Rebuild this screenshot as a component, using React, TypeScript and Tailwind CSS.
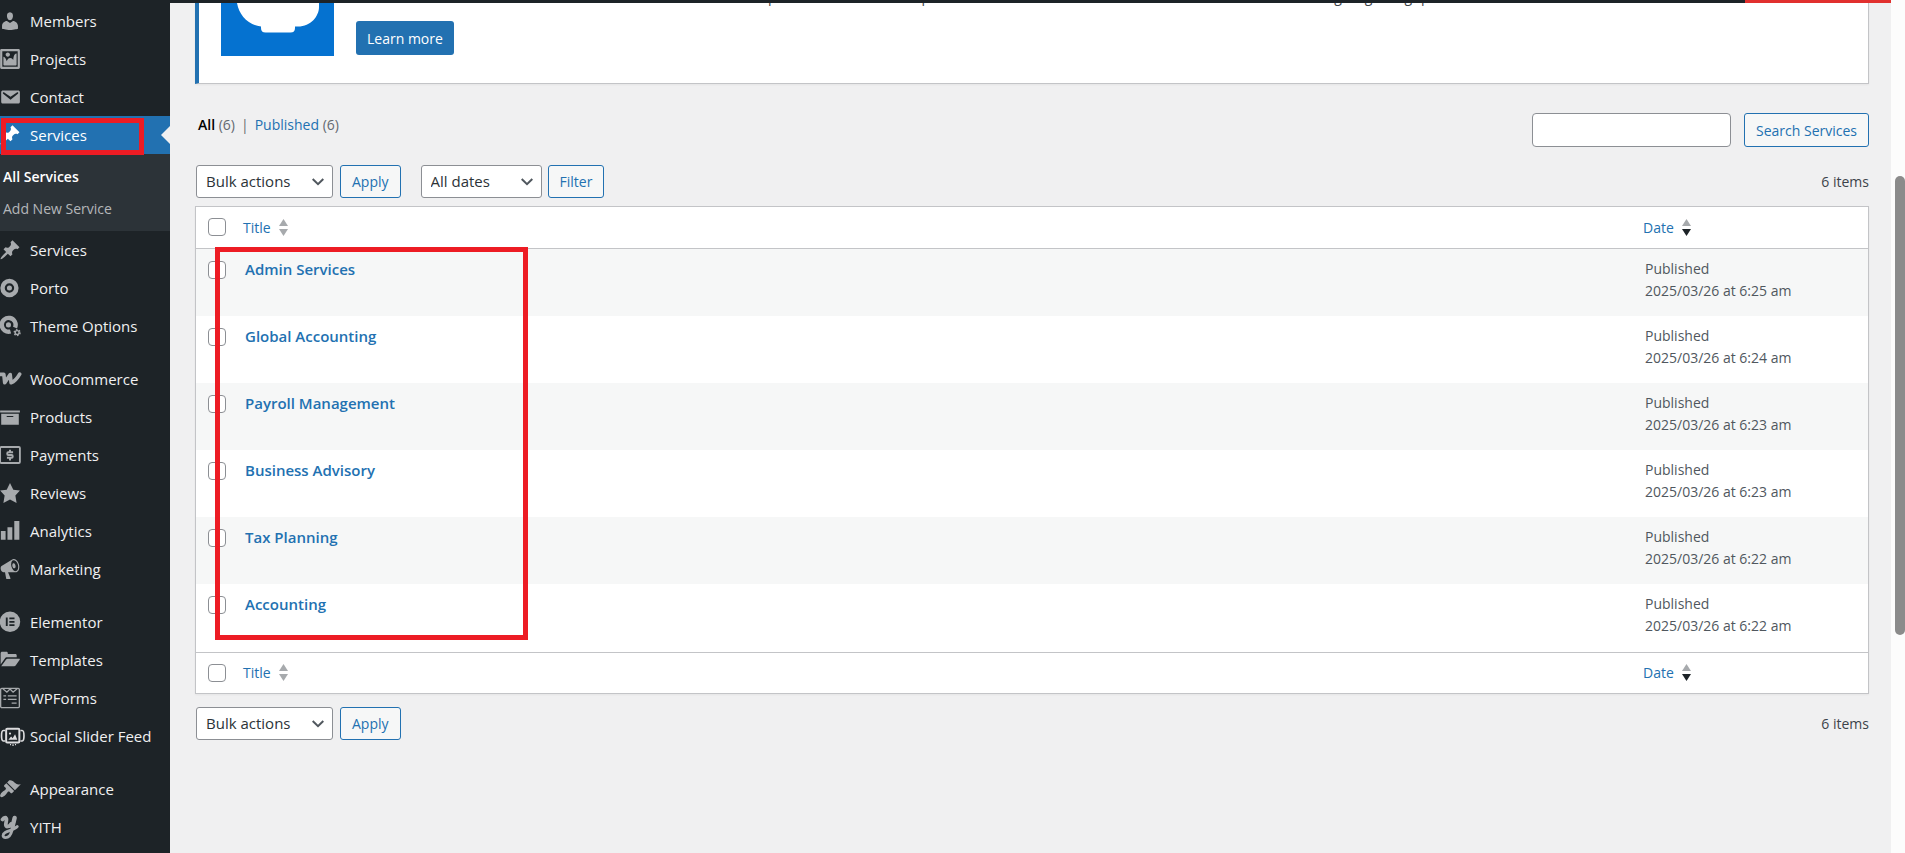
import React, { useState } from "react";
import clsx from "clsx";

const icons: Record<string, React.ReactNode> = {
  user: (
    <path d="M10 9.25c-2.27 0-2.73-3.44-2.73-3.44C7 4.02 7.82 2 9.97 2c2.16 0 2.98 2.02 2.71 3.81 0 0-.41 3.44-2.68 3.44zm0 2.57L12.72 10c2.39 0 4.52 2.33 4.52 4.53v2.49s-3.65 1.13-7.24 1.13c-3.65 0-7.24-1.13-7.24-1.13v-2.49c0-2.25 1.94-4.48 4.47-4.48z" />
  ),
  image: (
    <path d="M2.25 1h15.5c.69 0 1.25.56 1.25 1.25v15.5c0 .69-.56 1.25-1.25 1.25H2.25C1.56 19 1 18.44 1 17.75V2.25C1 1.56 1.56 1 2.25 1zM17 17V3H3v14h14zM10 6c0-1.1-.9-2-2-2s-2 .9-2 2 .9 2 2 2 2-.9 2-2zm3 5s0-6 3-6v10c0 .55-.45 1-1 1H5c-.55 0-1-.45-1-1V8c2 0 3 4 3 4s1-3 3-3 3 2 3 2z" />
  ),
  email: (
    <path d="M3.87 4h13.25C18.37 4 19 4.59 19 5.79v8.42c0 1.19-.63 1.79-1.88 1.79H3.87c-1.25 0-1.88-.6-1.88-1.79V5.79c0-1.2.63-1.79 1.88-1.79zm6.62 8.6l6.74-5.53c.24-.2.43-.66.13-1.07-.29-.41-.82-.42-1.17-.17l-5.7 3.86L4.8 5.83c-.35-.25-.88-.24-1.17.17-.3.41-.11.87.13 1.07z" />
  ),
  pin: (
    <path d="M10.44 3.02l1.82-1.82 6.36 6.35-1.83 1.82c-1.05-.68-2.48-.57-3.41.36l-.75.75c-.92.93-1.04 2.35-.35 3.41l-1.83 1.82-2.41-2.41-2.8 2.79c-.42.42-3.38 2.71-3.8 2.29s1.86-3.39 2.28-3.81l2.79-2.79L4.1 9.36l1.83-1.82c1.05.69 2.48.57 3.4-.36l.75-.75c.93-.92 1.05-2.35.36-3.41z" />
  ),
  porto: (
    <>
      <circle cx="9.5" cy="10" r="6.3" fill="none" stroke="currentColor" strokeWidth="4" />
      <circle cx="9.5" cy="10" r="2.3" />
    </>
  ),
  options: (
    <>
      <path
        d="M14.6 11.4A6.3 6.3 0 1 0 10.5 15"
        fill="none"
        stroke="currentColor"
        strokeWidth="4"
      />
      <circle cx="8.6" cy="9" r="2.3" />
      <circle cx="16.5" cy="16" r="1.8" fill="none" stroke="currentColor" strokeWidth="1.3" />
      <circle cx="16.5" cy="16" r="2.7" fill="none" stroke="currentColor" strokeWidth="1.2" strokeDasharray="1.4 1.43" />
    </>
  ),
  woo: (
    <path
      d="M.6 5.8H4.4L5.2 13.4 10.2 6 11 13.4Q15.2 12 18.8 5.6"
      fill="none"
      stroke="currentColor"
      strokeWidth="3.3"
      strokeLinejoin="round"
      strokeLinecap="round"
    />
  ),
  archive: <path d="M19 4v2H1V4h18zM2 7h16v10H2V7zm11 3V9H7v1h6z" />,
  payments: (
    <>
      <rect x="1" y="2.7" width="18" height="14.6" rx="1" fill="none" stroke="currentColor" strokeWidth="1.7" />
      <path
        d="M12.8 7.6H8.4C7.2 7.6 7.2 10 8.4 10h3.1c1.3 0 1.3 2.6 0 2.6H7.2M10 5.2v2.4M10 12.6v2.4"
        fill="none"
        stroke="currentColor"
        strokeWidth="1.8"
      />
    </>
  ),
  star: <path d="M10 1l3 6 6 .75-4.12 4.62L16 19l-6-3-6 3 1.13-6.63L1 7.75 7 7z" />,
  chart: <path d="M18.5 18V1h-4.6v17zM12.1 18V6.6H7.7V18zM6 18V10H1.7v8z" />,
  megaphone: (
    <path d="M18.15 5.94c.46 1.62.38 3.22-.02 4.48-.42 1.28-1.26 2.18-2.3 2.48-.16.06-.26.06-.4.06-.06.02-.12.02-.18.02-.06.02-.14.02-.22.02h-6.8l2.22 5.5c.02.14-.06.26-.14.34-.08.1-.24.16-.34.16H6.95c-.1 0-.26-.06-.34-.16-.08-.08-.16-.2-.14-.34l-1-5.5H4.25l-.02-.02c-.5.06-1.08-.18-1.54-.62s-.88-1.08-1.06-1.88c-.24-.8-.2-1.56-.02-2.2.18-.62.58-1.08 1.06-1.3l.02-.02 9-5.4c.1-.06.18-.1.24-.16.06-.04.14-.08.24-.12.16-.08.28-.12.5-.18 1.04-.3 2.24.1 3.22.98s1.84 2.24 2.26 3.86zm-2.58 5.98h-.02c.4-.1.74-.34 1.04-.7.58-.7.86-1.76.86-3.04 0-.64-.1-1.3-.28-1.98-.34-1.36-1.02-2.5-1.78-3.24s-1.68-1.1-2.46-.88c-.82.22-1.4.96-1.7 2-.32 1.04-.28 2.36.06 3.72.38 1.36 1 2.5 1.8 3.24.78.74 1.62 1.1 2.48.88zm-2.54-7.08c.22-.04.42-.02.62.04.38.16.76.48 1.02 1s.42 1.2.42 1.78c0 .3-.04.56-.12.8-.18.48-.44.84-.86.94-.34.1-.8-.06-1.14-.4s-.64-.86-.78-1.5c-.18-.62-.12-1.24.02-1.72s.48-.84.82-.94z" />
  ),
  elementor: (
    <path
      fillRule="evenodd"
      d="M10 .5a9.3 9.3 0 1 0 0 18.6 9.3 9.3 0 0 0 0-18.6zM6.2 6h1.7v7.6H6.2zM9.4 6h4.7v1.6H9.4zM9.4 9h4.7v1.6H9.4zM9.4 12h4.7v1.6H9.4z"
    />
  ),
  folder: (
    <path d="M1.5 14.2V4c0-.9.5-1.4 1.4-1.4h3.8c.9 0 1.3.5 1.3 1.3v.7h6.8c.9 0 1.3.5 1.3 1.3v1.7H7.5c-1 0-1.7.4-2.3 1.2zM2 15.6l4.3-5.8c.4-.6.9-.9 1.6-.9h10.4c.6 0 .8.4.5.9l-3.5 4.9c-.4.6-.9.9-1.6.9z" />
  ),
  wpforms: (
    <g fill="none" stroke="currentColor" strokeWidth="1.2">
      <rect x="1.5" y="1.3" width="17" height="17.4" rx="1" />
      <path d="M3.5 1.5l3.7 3.2L10 1.8l2.8 2.9 3.7-3.2M4 8h2.5M8 8h8M4 11.3h2.5M8 11.3h8M11.5 14.7H16" />
    </g>
  ),
  slider: (
    <g fill="none" stroke="#dcdcde" strokeWidth="1.5">
      <rect x="6.5" y="3.5" width="12" height="12.5" rx="1" strokeWidth="1.8" />
      <path d="M5.5 5H4Q2.3 5 2.3 9.8T4 14.5h1.5M19.5 5H21q1.7 0 1.7 4.8T21 14.5h-1.5" />
      <path d="M8.5 13.5l2.5-3 1.4 1.5 2.2-3.5 2 5z" fill="#dcdcde" stroke="none" />
      <circle cx="10" cy="7.8" r="1" fill="#dcdcde" stroke="none" />
      <path d="M10 17.8h1M12 18.3h1.5M14.5 17.8h1" strokeWidth="1" />
    </g>
  ),
  brush: (
    <path d="M14.48 11.06L7.41 3.99l1.5-1.5c.5-.56 2.3-.47 3.51.32 1.21.8 1.43 1.28 2.91 2.1 1.18.64 2.45 1.26 4.45.85zm-.71.71L6.7 4.7 4.93 6.47c-.39.39-.39 1.02 0 1.41l1.06 1.06c.39.39.39 1.03 0 1.42-.6.6-1.43 1.11-2.21 1.69-.35.26-.7.53-1.01.84C1.43 14.23.4 16.08 1.4 17.07c.99 1 2.84-.03 4.18-1.36.31-.31.58-.66.85-1.02.57-.78 1.08-1.61 1.69-2.21.39-.39 1.02-.39 1.41 0l1.06 1.06c.39.39 1.02.39 1.41 0z" />
  ),
  yith: (
    <g fill="none" stroke="currentColor" strokeLinecap="round">
      <path d="M3.2 3.2C4.6 1 7 1 6.8 3.4L6.2 7.4C5.9 10.4 9.2 10.2 11 7.2" strokeWidth="3.4" />
      <path d="M14.4 1.4L11.8 13C10.7 17.4 8.6 19.6 6 19.6 3 19.4 3 16.6 5.6 15 8.8 13.2 13.8 12.6 16.6 9.6" strokeWidth="2.6" />
      <path d="M14.2 1.8L12.2 10" strokeWidth="4" />
    </g>
  ),
};

type Item = { label: string; icon: string };

const topItems: Item[] = [
  { label: "Members", icon: "user" },
  { label: "Projects", icon: "image" },
  { label: "Contact", icon: "email" },
];

const groups: Item[][] = [
  [
    { label: "Services", icon: "pin" },
    { label: "Porto", icon: "porto" },
    { label: "Theme Options", icon: "options" },
  ],
  [
    { label: "WooCommerce", icon: "woo" },
    { label: "Products", icon: "archive" },
    { label: "Payments", icon: "payments" },
    { label: "Reviews", icon: "star" },
    { label: "Analytics", icon: "chart" },
    { label: "Marketing", icon: "megaphone" },
  ],
  [
    { label: "Elementor", icon: "elementor" },
    { label: "Templates", icon: "folder" },
    { label: "WPForms", icon: "wpforms" },
    { label: "Social Slider Feed", icon: "slider" },
  ],
  [
    { label: "Appearance", icon: "brush" },
    { label: "YITH", icon: "yith" },
  ],
];

const services = [
  { title: "Admin Services", date: "2025/03/26 at 6:25 am" },
  { title: "Global Accounting", date: "2025/03/26 at 6:24 am" },
  { title: "Payroll Management", date: "2025/03/26 at 6:23 am" },
  { title: "Business Advisory", date: "2025/03/26 at 6:23 am" },
  { title: "Tax Planning", date: "2025/03/26 at 6:22 am" },
  { title: "Accounting", date: "2025/03/26 at 6:22 am" },
];

const checkboxStyle =
  "block size-[18px] appearance-none rounded-[4px] border border-[#8c8f94] bg-white checked:bg-[#2271b1]";

function MenuItem({ label, icon, active = false }: Item & { active?: boolean }) {
  return (
    <a
      href="#"
      className={clsx(
        "flex h-[38px] items-center gap-[9px] whitespace-nowrap text-[15px]",
        active ? "bg-[#2271b1] text-white" : "text-[#f0f0f1]"
      )}
    >
      <svg
        viewBox="0 0 20 20"
        fill="currentColor"
        className={clsx("-ml-px size-[22px] shrink-0 overflow-visible", active ? "text-white" : "text-[#a7aaad]")}
      >
        {icons[icon]}
      </svg>
      {label}
    </a>
  );
}

function Sidebar() {
  return (
    <nav className="w-[170px] shrink-0 bg-[#1d2327] pt-[2px]">
      {topItems.map((item) => (
        <MenuItem key={item.label} {...item} />
      ))}

      {/* Current section */}
      <div className="relative">
        <MenuItem label="Services" icon="pin" active />
        <span className="absolute top-[10px] right-0 border-y-[9px] border-r-[9px] border-y-transparent border-r-[#f0f0f1]" />
        <span className="absolute top-[2px] left-px h-[37px] w-[143px] border-[5px] border-[#ed1c24]" />
      </div>
      <div className="flex flex-col gap-[10px] bg-[#2c3338] px-[3px] pt-3 pb-[11px] text-[14px] leading-[22px]">
        <a href="#" className="font-semibold text-white">
          All Services
        </a>
        <a href="#" className="text-[#b4b7ba]">
          Add New Service
        </a>
      </div>

      {groups.map((group, i) => (
        <div key={i} className={i > 0 ? "mt-[15px]" : ""}>
          {group.map((item) => (
            <MenuItem key={item.label} {...item} />
          ))}
        </div>
      ))}
    </nav>
  );
}

function OutlineButton({ children, tall = false }: { children: React.ReactNode; tall?: boolean }) {
  return (
    <button
      type="button"
      className={clsx(
        "rounded-[3px] border border-[#2271b1] bg-[#f6f7f7] px-[11px] text-[14px] whitespace-nowrap text-[#2271b1]",
        tall ? "h-[34px]" : "h-[33px]"
      )}
    >
      {children}
    </button>
  );
}

function Select({ label, option, className }: { label: string; option: string; className: string }) {
  return (
    <div className={clsx("relative", className)}>
      <select
        aria-label={label}
        className="h-[33px] w-full appearance-none rounded-[3px] border border-[#8c8f94] bg-white pl-[9px] text-[15px] text-[#2c3338]"
      >
        <option>{option}</option>
      </select>
      <svg
        viewBox="0 0 12 8"
        className="pointer-events-none absolute top-[13px] right-[9px] h-2 w-3"
        fill="none"
        stroke="#50575e"
        strokeWidth="2"
      >
        <path d="M.7 1l5.3 5.2L11.3 1" />
      </svg>
    </div>
  );
}

function SortLink({ label, desc = false }: { label: string; desc?: boolean }) {
  return (
    <a href="#" className="flex items-center gap-2 font-normal text-[#2271b1]">
      {label}
      <svg viewBox="0 0 9 17" className="h-[17px] w-[9px]">
        <path d="M4.5 0L9 7H0z" fill="#a7aaad" />
        <path d="M4.5 17L9 10H0z" fill={desc ? "#1d2327" : "#a7aaad"} />
      </svg>
    </a>
  );
}

function HeadingRow({ all, onToggle, place }: { all: boolean; onToggle: () => void; place: string }) {
  return (
    <tr className="h-[41px]">
      <td className="pl-3">
        <input
          type="checkbox"
          aria-label={`Select all (${place})`}
          checked={all}
          onChange={onToggle}
          className={checkboxStyle}
        />
      </td>
      <th className="pl-[9px] text-left">
        <SortLink label="Title" />
      </th>
      <th className="pl-[9px] text-left">
        <SortLink label="Date" desc />
      </th>
    </tr>
  );
}

function ServicesTable() {
  const [selected, setSelected] = useState<string[]>([]);
  const all = selected.length === services.length;

  const toggleAll = () => setSelected(all ? [] : services.map((s) => s.title));
  const toggle = (title: string) =>
    setSelected(selected.includes(title) ? selected.filter((t) => t !== title) : [...selected, title]);

  return (
    <div className="relative mt-2 border border-[#c3c4c7] bg-white text-[14px] shadow-xs">
      <table className="w-full table-fixed border-collapse">
        <colgroup>
          <col className="w-[38px]" />
          <col />
          <col className="w-[234px]" />
        </colgroup>
        <thead className="border-b border-[#c3c4c7]">
          <HeadingRow all={all} onToggle={toggleAll} place="top" />
        </thead>
        <tbody>
          {services.map((s) => (
            <tr key={s.title} className="h-[67px] align-top first:h-[68px] last:h-[68px] odd:bg-[#f6f7f7]">
              <td className="pt-3 pl-3">
                <input
                  type="checkbox"
                  aria-label={`Select ${s.title}`}
                  checked={selected.includes(s.title)}
                  onChange={() => toggle(s.title)}
                  className={checkboxStyle}
                />
              </td>
              <td className="pt-[9px] pl-[11px] text-[15px] leading-[22px]">
                <a href="#" className="font-semibold text-[#2271b1]">
                  {s.title}
                </a>
              </td>
              <td className="pt-[9px] pl-[11px] leading-[22px] text-[#50575e]">
                Published
                <br />
                {s.date}
              </td>
            </tr>
          ))}
        </tbody>
        <tfoot className="border-t border-[#c3c4c7]">
          <HeadingRow all={all} onToggle={toggleAll} place="bottom" />
        </tfoot>
      </table>
      {/* Highlight round the titles */}
      <div className="pointer-events-none absolute top-10 left-[19px] h-[393px] w-[313px] border-[5px] border-[#ed1c24]" />
    </div>
  );
}

export default function App() {
  return (
    <div className="flex h-screen overflow-hidden bg-[#f0f0f1] font-['Open_Sans','Noto_Sans',sans-serif] text-[#3c434a]">
      <Sidebar />

      <div className="min-w-0 flex-1">
        {/* Admin bar */}
        <div className="flex h-[3px] justify-end bg-[#1d2327]">
          <div className="w-[146px] bg-[#e1302e]" />
        </div>

        <main className="pr-[22px] pl-[25px]">
          {/* Notice */}
          <section className="flex items-start gap-[22px] border border-t-0 border-l-4 border-[#c3c4c7] border-l-[#2271b1] bg-white pb-[27px] pl-[22px] shadow-xs">
            <svg viewBox="0 0 113 53" className="h-[53px] w-[113px] shrink-0">
              <path d="M0 0h113v53H0z" fill="#0572d0" />
              <path
                d="M16 0c2 12 11 22 24 23.5v1.5q0 4.500 4.500 4.500h25q4.500 0 4.500-4.500v-1.500h3C90 23.500 98 13 98 4V0z"
                fill="#fff"
              />
            </svg>
            <div>
              {/* Last line of the notice, scrolled under the admin bar */}
              <p aria-hidden="true" className="flex h-[3px] items-end overflow-hidden text-[14px] leading-[18px]">
                <span className="ml-[412px]">p</span>
                <span className="ml-[145px]">p</span>
                <span className="ml-[404px]">g</span>
                <span className="ml-[23px]">g</span>
                <span className="ml-8">g</span>
                <span className="ml-[9px]">p</span>
              </p>
              <button
                type="button"
                className="mt-[15px] h-[34px] rounded-[3px] bg-[#2271b1] px-[11px] text-[14px] text-white"
              >
                Learn more
              </button>
            </div>
          </section>

          {/* Views and search */}
          <div className="mt-[29px] flex items-start justify-between">
            <ul className="flex gap-[6px] pt-px pl-[3px] text-[14px] leading-[22px] text-[#646970]">
              <li>
                <a href="#" className="font-semibold text-black">
                  All
                </a>{" "}
                (6)
              </li>
              <li>|</li>
              <li>
                <a href="#" className="text-[#2271b1]">
                  Published
                </a>{" "}
                (6)
              </li>
            </ul>
            <div className="flex gap-[13px]">
              <input
                type="search"
                aria-label="Search Services"
                className="h-[34px] w-[199px] rounded-[4px] border border-[#8c8f94] bg-white px-2"
              />
              <OutlineButton tall>Search Services</OutlineButton>
            </div>
          </div>

          {/* Bulk actions and filters */}
          <div className="mt-[18px] flex items-center pl-px">
            <Select label="Bulk actions" option="Bulk actions" className="mr-[7px] w-[137px]" />
            <OutlineButton>Apply</OutlineButton>
            <Select label="Filter by date" option="All dates" className="mr-[6px] ml-5 w-[121px]" />
            <OutlineButton>Filter</OutlineButton>
            <span className="ml-auto text-[14px]">6 items</span>
          </div>

          <ServicesTable />

          <div className="mt-[13px] flex items-center pl-px">
            <Select label="Bulk actions (bottom)" option="Bulk actions" className="mr-[7px] w-[137px]" />
            <OutlineButton>Apply</OutlineButton>
            <span className="ml-auto text-[14px]">6 items</span>
          </div>
        </main>
      </div>

      {/* Scrollbar */}
      <div className="w-[14px] shrink-0 bg-[#fcfcfc] pt-44 pl-1">
        <div className="h-[459px] rounded-[5px] bg-[#8b8b8b]" />
      </div>
    </div>
  );
}
